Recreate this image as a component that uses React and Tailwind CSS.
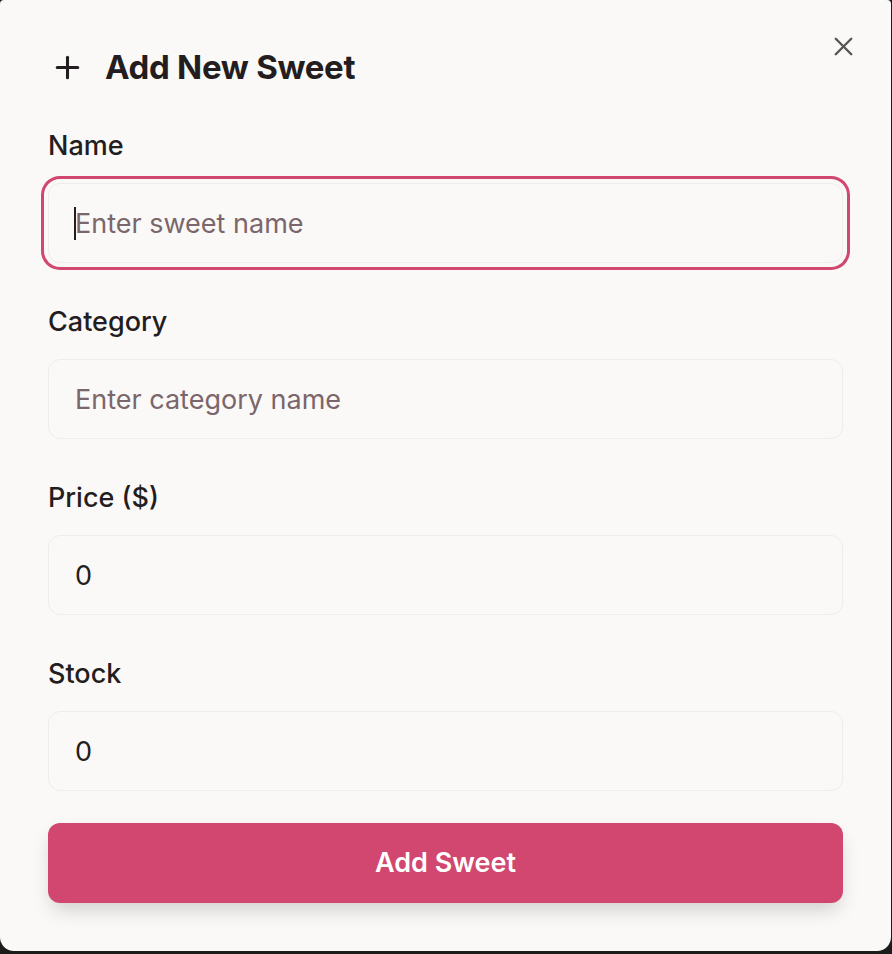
import { Plus, X } from 'lucide-react'

const fields = [
  { label: 'Name', placeholder: 'Enter sweet name', focused: true },
  { label: 'Category', placeholder: 'Enter category name' },
  { label: 'Price ($)', value: '0' },
  { label: 'Stock', value: '0' },
]

export default function App(){
  return (
    <div className="min-h-screen bg-[#1c1c1c]" style={{ fontFamily: 'Inter, "Noto Sans", sans-serif' }}>
      <div className="relative w-[891px] h-[951px] bg-[#faf9f7] rounded-b-[14px] rounded-t-[4px] px-[48px] pt-[47px] text-[#231d20]">
        {/* close */}
        <button className="absolute top-[31px] right-[32px] text-[#5b5557]">
          <X size={31} strokeWidth={1.9} />
        </button>

        {/* header */}
        <div className="flex items-center h-[40px] gap-[20px] pl-[2px]">
          <Plus size={35} strokeWidth={2.1} className="text-[#231d20]" />
          <h2 className="text-[33px] leading-[40px] font-bold tracking-[-0.3px]">Add New Sweet</h2>
        </div>

        {/* form */}
        <form className="mt-[41px]">
          {fields.map((f, i) => (
            <div key={f.label} className={i > 0 ? 'mt-[41px]' : ''}>
              <label className="block text-[27px] leading-[36px] font-medium mb-[19px]">{f.label}</label>
              <div className="relative">
                <input
                  type="text"
                  readOnly
                  placeholder={f.placeholder}
                  defaultValue={f.value}
                  className={
                    'w-full h-[80px] rounded-[12px] border-[1.5px] border-[#efedeb] bg-[#faf9f7] pl-[26px] text-[27px] text-[#231d20] placeholder:text-[#7a666b] outline-none ' +
                    (f.focused ? 'ring-[3px] ring-[#d1476f] ring-offset-[4px] ring-offset-[#faf9f7]' : '')
                  }
                />
                {f.focused && (
                  <span className="absolute left-[26px] top-[24px] w-[2px] h-[33px] bg-[#231d20]" />
                )}
              </div>
            </div>
          ))}

          <button
            type="button"
            className="mt-[32px] w-full h-[80px] rounded-[12px] bg-[#d1476f] text-white text-[27px] font-semibold shadow-[0_10px_20px_-4px_rgba(0,0,0,0.18)]"
          >
            Add Sweet
          </button>
        </form>
      </div>
    </div>
  )
}
